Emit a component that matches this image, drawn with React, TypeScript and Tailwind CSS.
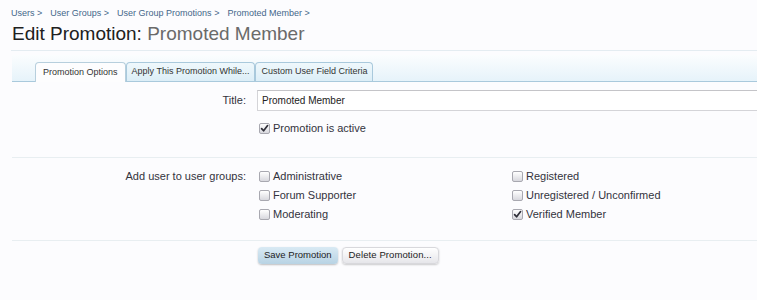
const crumbs = ["Users", "User Groups", "User Group Promotions", "Promoted Member"]

const tabs = [
  { label: "Promotion Options", active: true },
  { label: "Apply This Promotion While...", active: false },
  { label: "Custom User Field Criteria", active: false },
]

const groupsLeft = [
  { label: "Administrative", checked: false },
  { label: "Forum Supporter", checked: false },
  { label: "Moderating", checked: false },
]

const groupsRight = [
  { label: "Registered", checked: false },
  { label: "Unregistered / Unconfirmed", checked: false },
  { label: "Verified Member", checked: true },
]

function Checkbox({ checked }: { checked: boolean }) {
  return (
    <span className="relative inline-block w-[11px] h-[11px] rounded-[2px] border border-[#a8a8b0] bg-gradient-to-b from-[#ffffff] to-[#d8d8de] shrink-0">
      {checked && (
        <svg viewBox="0 0 11 11" className="absolute left-[-1px] top-[-1px] w-[11px] h-[11px]">
          <path d="M2.6 5.6 L4.6 7.8 L8.6 2.6" fill="none" stroke="#2e2e38" strokeWidth="1.7" strokeLinecap="round" strokeLinejoin="round" />
        </svg>
      )}
    </span>
  )
}

function CheckRow({ label, checked }: { label: string; checked: boolean }) {
  return (
    <div className="h-[19px] flex items-center gap-[3px] pl-[2px]">
      <Checkbox checked={checked} />
      <span className="text-[11px] text-[#33333d] leading-none whitespace-nowrap">{label}</span>
    </div>
  )
}

export default function App() {
  return (
    <div className="w-[757px] h-[300px] overflow-hidden bg-[#fcfcfe] font-['Liberation_Sans',Arial,sans-serif]">
      <div className="pl-[11px]">
        {/* breadcrumb */}
        <div className="pt-[8px] h-[19px] flex items-center text-[9px] leading-[11px] text-[#44678a]">
          {crumbs.map((c, i) => (
            <span key={i} className="mr-[8px]">
              {c} &gt;
            </span>
          ))}
        </div>

        <div className="pl-px pb-[4px] border-b border-[#e4ecf1]">
          <h1 className="mt-[3px] text-[19px] leading-[24px] font-normal text-[#202020]">
            Edit Promotion: <span className="text-[#6a6a6a]">Promoted Member</span>
          </h1>
        </div>

        {/* tab strip */}
        <div className="ml-px mt-[4px] h-[27px] flex items-end pl-[23px] border-b border-[#a9c9dc] bg-gradient-to-b from-[#fbfdfe] to-[#e6f3fa]">
          {tabs.map((t, i) => (
            <div
              key={i}
              className={
                t.active
                  ? "h-[20px] -mb-px px-[7px] flex items-center rounded-t-[4px] border border-b-0 border-[#b7cfdd] bg-[#fdfdfe] text-[9px] text-[#333]"
                  : "h-[19px] px-[5px] flex items-center rounded-t-[4px] border border-b-0 border-[#a9c9dc] bg-gradient-to-b from-[#eff8fc] to-[#dceef7] text-[9px] text-[#333]"
              }
            >
              {t.label}
            </div>
          ))}
        </div>

        {/* title section */}
        <div className="ml-px pt-[8px] pb-[19px] border-b border-[#e8eef1]">
          <div className="flex items-center gap-[11px]">
            <div className="w-[234px] shrink-0 text-right text-[11px] text-[#33333d]">Title:</div>
            <div className="w-[520px] shrink-0 h-[21px] flex items-center pl-[4px] border border-[#d4d4d8] border-t-[#c4c4c8] bg-white text-[10px] text-[#222]">
              Promoted Member
            </div>
          </div>
          <div className="mt-[8px] ml-[245px]">
            <CheckRow label="Promotion is active" checked={true} />
          </div>
        </div>

        {/* groups section */}
        <div className="ml-px pt-[9px] pb-[16px] border-b border-[#e8eef1] flex">
          <div className="w-[234px] shrink-0 h-[19px] flex items-center justify-end text-[11px] text-[#33333d]">
            Add user to user groups:
          </div>
          <div className="ml-[11px] flex shrink-0">
            <div className="w-[253px]">
              {groupsLeft.map((g) => (
                <CheckRow key={g.label} label={g.label} checked={g.checked} />
              ))}
            </div>
            <div>
              {groupsRight.map((g) => (
                <CheckRow key={g.label} label={g.label} checked={g.checked} />
              ))}
            </div>
          </div>
        </div>

        {/* buttons */}
        <div className="pt-[6px] pl-[247px] flex gap-[4px]">
          <button className="h-[17px] px-[6px] rounded-[4px] bg-gradient-to-b from-[#d9eaf4] to-[#b8d3e4] text-[9.5px] text-[#222] shadow-[0_1px_2px_rgba(0,0,0,0.25)]">
            Save Promotion
          </button>
          <button className="h-[17px] px-[6px] rounded-[4px] border border-[#d8d8dc] bg-gradient-to-b from-[#ffffff] to-[#e6e6ea] text-[9.5px] tracking-[0.1px] text-[#222] shadow-[0_1px_2px_rgba(0,0,0,0.2)]">
            Delete Promotion...
          </button>
        </div>
      </div>
    </div>
  )
}
